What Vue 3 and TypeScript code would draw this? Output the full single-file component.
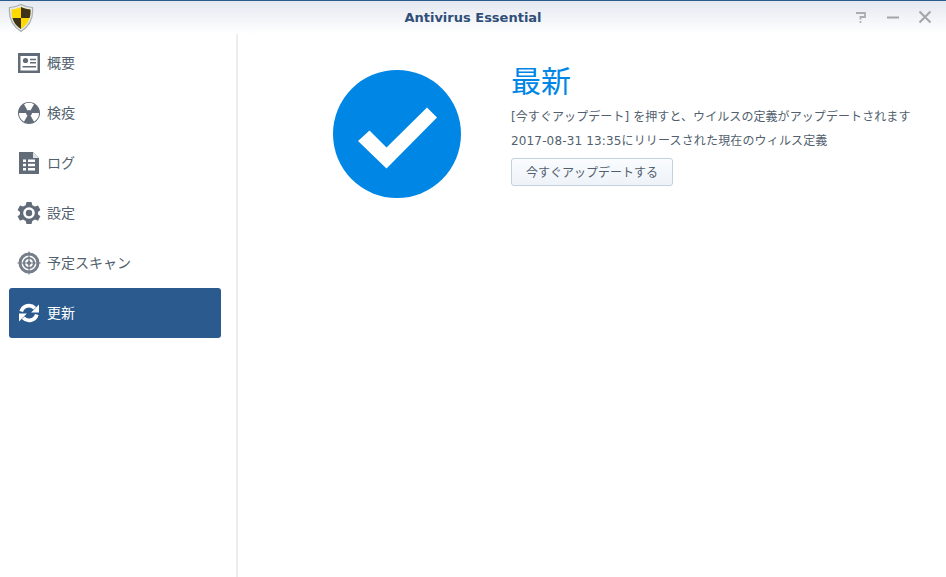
<script setup lang="ts">
interface Item { label: string; icon: string; active?: boolean }
const items: Item[] = [
  { label: '概要', icon: 'card' },
  { label: '検疫', icon: 'rad' },
  { label: 'ログ', icon: 'log' },
  { label: '設定', icon: 'gear' },
  { label: '予定スキャン', icon: 'target' },
  { label: '更新', icon: 'sync', active: true },
]
</script>

<template>
  <div class="window">
    <header class="titlebar">
      <svg class="logo" width="26" height="30" viewBox="0 0 26 30">
        <path d="M13 1.5 C17 3.5 21 4.5 24.5 4.5 C25.5 15 22 23 13 28.5 C4 23 .5 15 1.5 4.5 C5 4.5 9 3.5 13 1.5Z" fill="#e4e8ea" stroke="#a9b0b0" stroke-width="1.2"/>
        <path d="M13 4 C16.5 5.6 19.5 6.4 22.5 6.6 C23 15 20 22 13 26 C6 22 3 15 3.5 6.6 C6.5 6.4 9.5 5.6 13 4Z" fill="#ffd900"/>
        <path d="M13 4 C16.5 5.6 19.5 6.4 22.5 6.6 C22.7 9.8 22.4 12.6 21.6 15 H13Z M13 15 V26 C8.5 23.5 5.7 19.6 4.4 15Z" fill="#3d3318"/>
      </svg>
      <div class="title">Antivirus Essential</div>
      <div class="controls">
        <svg width="14" height="14" viewBox="0 0 14 14" fill="none" stroke="#a9adb2" stroke-width="1.8">
          <path d="M2 3 H11 V7 H6.5 V9.5"/><path d="M6.5 11 V13" stroke-width="1.6"/>
        </svg>
        <svg width="14" height="14" viewBox="0 0 14 14" stroke="#a3a6a8" stroke-width="2"><path d="M1 7.5 H13"/></svg>
        <svg width="14" height="14" viewBox="0 0 14 14" fill="none" stroke="#a3a6a8" stroke-width="2"><path d="M1.5 1.5 L12.5 12.5 M12.5 1.5 L1.5 12.5"/></svg>
      </div>
    </header>
    <div class="body">
      <nav class="sidebar">
        <div v-for="item in items" :key="item.label" class="nav-item" :class="{ active: item.active }">
          <svg class="nav-icon" width="24" height="24" viewBox="0 0 24 24">
            <g v-if="item.icon === 'card'">
              <rect x="1" y="2" width="22" height="20" fill="#626b78"/>
              <rect x="3.500" y="5" width="17" height="14.5" fill="#fff"/>
              <circle cx="8.5" cy="9.5" r="2.6" fill="#626b78"/>
              <path d="M13 7.8 H19 V9.3 H13Z M13 11 H19 V12.5 H13Z M5.5 15 H19 V16.6 H5.5Z" fill="#626b78"/>
            </g>
            <g v-else-if="item.icon === 'rad'">
              <circle cx="12" cy="12" r="11" fill="#626b78"/>
              <path d="M9 12 H2 A10 10 0 0 0 7 20.7 L10.5 14.6 A3 3 0 0 1 9 12Z" fill="#fff"/>
              <path d="M15 12 H22 A10 10 0 0 1 17 20.7 L13.5 14.6 A3 3 0 0 0 15 12Z" fill="#fff"/>
              <path d="M10.500 9.4 L7 3.3 A10 10 0 0 1 17 3.3 L13.5 9.4 A3 3 0 0 0 10.5 9.4Z" fill="#fff"/>
            </g>
            <g v-else-if="item.icon === 'log'">
              <path d="M2 1 H16 L22 7 V23 H2Z" fill="#626b78"/>
              <path d="M16 1 L22 7 H16Z" fill="#dfe2e6"/>
              <path d="M6 8.5 H9 V11 H6Z M11 8.5 H18 V11 H11Z M6 12.7 H9 V15.2 H6Z M11 12.7 H18 V15.2 H11Z M6 17 H9 V19.5 H6Z M11 17 H18 V19.5 H11Z" fill="#fff"/>
            </g>
            <g v-else-if="item.icon === 'gear'">
              <path d="M9.5 1 H14.5 L15.3 4.2 L18 5.6 L21 4.4 L23.4 9 L21 11 V13.5 L23.4 15.3 L21 19.8 L18 18.6 L15.3 20 L14.5 23 H9.5 L8.7 20 L6 18.6 L3 19.8 L.6 15.3 L3 13.5 V11 L.6 9 L3 4.4 L6 5.6 L8.7 4.2Z" fill="#626b78"/>
              <circle cx="12" cy="12" r="5.8" fill="#fff"/>
              <circle cx="12" cy="12" r="3.2" fill="#626b78"/>
            </g>
            <g v-else-if="item.icon === 'target'" fill="none" stroke="#767e8a">
              <circle cx="12" cy="12" r="9" stroke-width="3"/>
              <circle cx="12" cy="12" r="5" stroke-width="2.2"/>
              <circle cx="12" cy="12" r="1.6" fill="#767e8a" stroke-width="1"/>
              <path d="M12 .5 V23.5 M.5 12 H23.5" stroke-width="1.2"/>
            </g>
            <g v-else fill="none" stroke="#fff" stroke-width="3.8">
              <path d="M4.2 10.5 A8 8 0 0 1 17.8 7.2"/>
              <path d="M19.8 13.5 A8 8 0 0 1 6.2 16.8"/>
              <path d="M22 3.5 V11.4 H14.1Z M2 20.5 V12.6 H9.9Z" fill="#fff" stroke="none"/>
            </g>
          </svg>
          <span class="nav-label">{{ item.label }}</span>
        </div>
      </nav>
      <main class="content">
        <svg class="status" width="128" height="128" viewBox="0 0 128 128">
          <circle cx="64" cy="64" r="64" fill="#0086e5"/>
          <polygon points="25,71 36.5,60.5 53.5,77.5 94,37.5 104,47.5 53.5,98.5" fill="#fff"/>
        </svg>
        <div class="info">
          <h1>最新</h1>
          <p class="line first">[今すぐアップデート] を押すと、ウイルスの定義がアップデートされます</p>
          <p class="line">2017-08-31 13:35にリリースされた現在のウィルス定義</p>
          <button class="update" type="button">今すぐアップデートする</button>
        </div>
      </main>
    </div>
  </div>
</template>

<style>
html, body { margin: 0; background: #fff; }
</style>

<style scoped>
.window {
  width: 946px;
  height: 577px;
  display: flex;
  flex-direction: column;
  overflow: hidden;
  background: #fff;
  font-family: "DejaVu Sans", "Noto Sans CJK JP", sans-serif;
}
.titlebar {
  height: 33px;
  flex: none;
  position: relative;
  display: flex;
  align-items: center;
  justify-content: center;
  border-top: 1px solid #2a5a8e;
  background: linear-gradient(#e4e8f0, #ffffff);
}
.logo { position: absolute; left: 8px; top: 2px; }
.title {
  font: bold 13px "DejaVu Sans", sans-serif;
  color: #2f4f78;
  margin-top: -1px;
}
.controls {
  position: absolute;
  right: 14px;
  top: 9px;
  display: flex;
  gap: 18px;
}
.controls svg { display: block; }
.body { flex: 1; display: flex; min-height: 0; }
.sidebar {
  width: 238px;
  flex: none;
  box-sizing: border-box;
  padding: 4px 15px 0 9px;
  border-right: 2px solid #ebedef;
}
.nav-item {
  height: 50px;
  display: flex;
  align-items: center;
  gap: 6px;
  padding-left: 8px;
  border-radius: 3px;
  font-size: 14px;
  color: #525f6e;
}
.nav-label { margin-top: -2px; }
.nav-item.active {
  background: #2a5a8e;
  color: #fff;
}
.nav-icon { flex: none; display: block; }
.content {
  flex: 1;
  display: flex;
  align-items: flex-start;
  padding: 36px 0 0 95px;
  gap: 50px;
}
.status { flex: none; display: block; }
.info { color: #525f6e; }
h1 {
  margin: -10px 0 0;
  font-size: 30px;
  line-height: 44px;
  font-weight: 400;
  color: #0086e5;
}
.line {
  margin: 0;
  font-size: 12px;
  line-height: 25px;
  white-space: nowrap;
  letter-spacing: 0.15px;
}
.line.first {
  margin: 1px 0 -1px;
  letter-spacing: 0.08px;
}
.update {
  display: block;
  margin-top: 4px;
  width: 162px;
  height: 28px;
  padding: 0 0 2px;
  border: 1px solid #c3d0e0;
  border-radius: 3px;
  background: linear-gradient(#fafcfe, #eef3f9);
  color: #525f6e;
  font: 12px "DejaVu Sans", "Noto Sans CJK JP", sans-serif;
}
</style>
